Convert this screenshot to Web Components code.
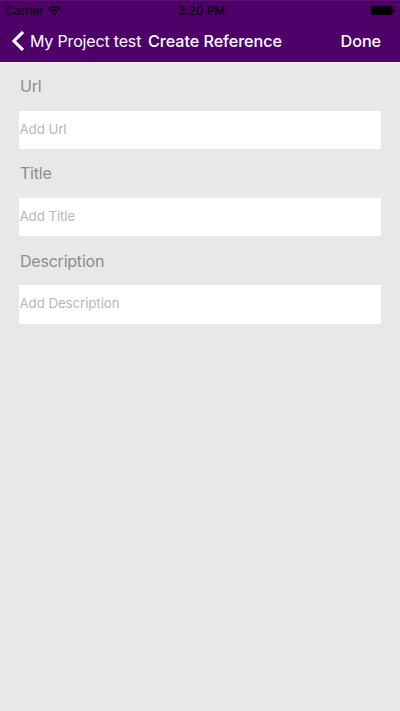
<!DOCTYPE html>
<html lang="en">
<head>
<meta charset="utf-8">
<title>Create Reference</title>
<style>
  html, body { margin: 0; height: 100%; }
  body { font-family: Inter, "Liberation Sans", sans-serif; background: #e8e8e8; overflow: hidden; }
</style>
</head>
<body>
<app-screen>
  <status-bar slot="top" carrier="Carrier" time="3:20 PM"></status-bar>
  <nav-bar slot="top">
    <span slot="back">My Project test</span>
    <span slot="title">Create Reference</span>
    <span slot="action">Done</span>
  </nav-bar>
  <form-field label="Url" hint="Add Url"></form-field>
  <form-field label="Title" hint="Add Title"></form-field>
  <form-field label="Description" hint="Add Description"></form-field>
</app-screen>
<script>
class BaseElement extends HTMLElement {
  connectedCallback() {
    if (!this.shadowRoot) this.attachShadow({ mode: 'open' }).innerHTML = this.render();
  }
}
customElements.define('app-screen', class extends BaseElement {
  render() {
    return `<style>
      :host { display: flex; flex-direction: column; height: 100vh; box-sizing: border-box; background: #e8e8e8; }
      header { background: #4e0068; height: 62px; box-sizing: border-box; border-top: 1px solid #5a0f72; flex: none; }
      main { border-top: 1px solid #f4f4f4; padding: 0 19px; flex: 1; }
    </style>
    <header><slot name="top"></slot></header><main><slot></slot></main>`;
  }
});
customElements.define('status-bar', class extends BaseElement {
  render() {
    return `<style>
      :host { display: grid; grid-template-columns: 1fr auto 1fr; align-items: center; height: 18px; padding: 0 5px 0 6px; color: #000; font-size: 11.5px; line-height: 18px; }
      .left { display: flex; align-items: center; gap: 5px; letter-spacing: -.05px; }
      .left svg { margin-top: -1px; }
      .time { font-weight: 550; letter-spacing: .15px; padding-left: 2px; }
      .left span, .time { padding-top: 1px; }
      .battery { justify-self: end; display: block; margin-top: -1px; }
    </style>
    <div class="left"><span>${this.getAttribute('carrier')}</span>
      <svg width="12" height="9" viewBox="0 0 12 9" fill="none" stroke="#000" stroke-width="1.5"><path d="M.6 3.2Q6-1.6 11.4 3.2M2.7 5.3Q6 2.4 9.3 5.3"/><path d="M6 8.8 4.1 6.9Q6 5.4 7.9 6.9Z" fill="#000" stroke="none"/></svg>
    </div>
    <span class="time">${this.getAttribute('time')}</span>
    <svg class="battery" width="24" height="9" viewBox="0 0 24 9"><rect x="0" y="0" width="21.5" height="9" rx="1.2"/><path d="M22.2 3Q24 3.2 24 4.5T22.2 6Z"/></svg>`;
  }
});
customElements.define('nav-bar', class extends BaseElement {
  render() {
    return `<style>
      :host { display: flex; align-items: center; height: 43px; padding: 0 19px 0 12px; color: #fff; font-size: 16px; line-height: 43px; white-space: nowrap; }
      svg { display: block; margin-right: 6px; flex: none; }
      span { padding-top: 1px; }
      .back { width: 118px; letter-spacing: -.17px; }
      .title { font-size: 16.2px; font-weight: 550; letter-spacing: -.06px; }
      .action { font-size: 16.2px; font-weight: 550; margin-left: auto; letter-spacing: -.08px; }
    </style>
    <svg width="12" height="20" viewBox="0 0 12 20" fill="none" stroke="#fff" stroke-width="3.1"><path d="M11 1 2 10l9 9"/></svg>
    <span class="back"><slot name="back"></slot></span>
    <span class="title"><slot name="title"></slot></span>
    <span class="action"><slot name="action"></slot></span>`;
  }
});
customElements.define('form-field', class extends BaseElement {
  render() {
    return `<style>
      :host { display: block; height: 87.3px; }
      .label { height: 47.5px; line-height: 47.5px; padding-left: 1px; font-size: 16px; letter-spacing: -.22px; color: #8c8c8c; }
      .box { height: 38.7px; line-height: 37.9px; background: #fff; font-size: 13.3px; letter-spacing: -.08px; color: #b7b7bc; padding-left: .5px; }
    </style>
    <div class="label">${this.getAttribute('label')}</div>
    <div class="box">${this.getAttribute('hint')}</div>`;
  }
});
</script>
</body>
</html>
